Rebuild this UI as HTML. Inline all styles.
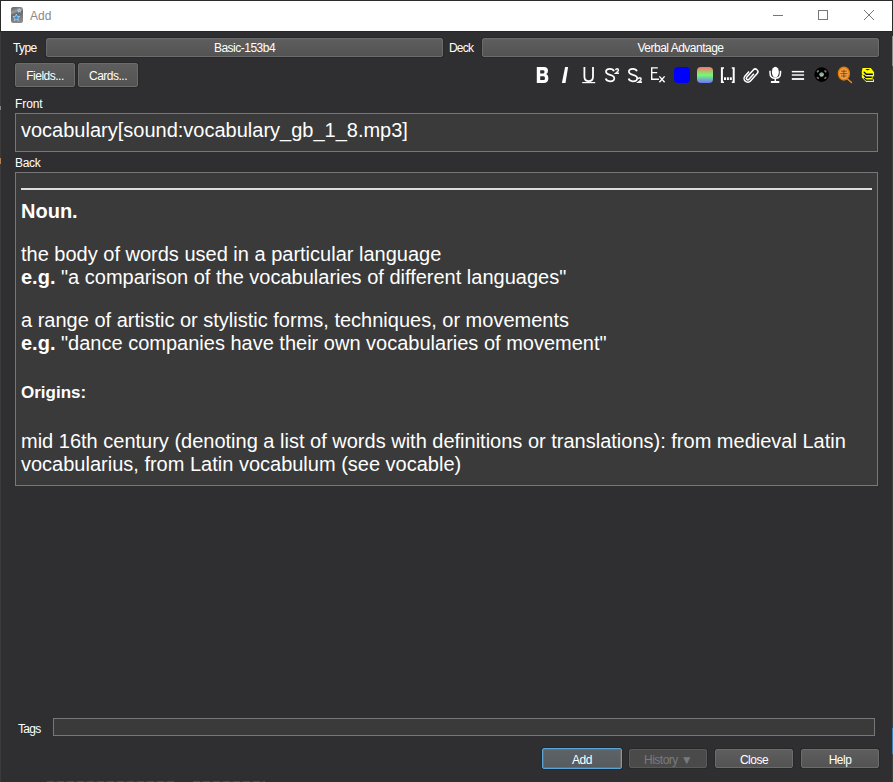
<!DOCTYPE html>
<html><head><meta charset="utf-8">
<style>
*{box-sizing:border-box;margin:0;padding:0}
html,body{width:893px;height:782px;overflow:hidden;background:#2f2f31;font-family:"Liberation Sans",sans-serif;color:#fff}
.a{position:absolute}
.ui{font-size:12px;letter-spacing:-0.5px;white-space:nowrap;line-height:14px}
.btn{position:absolute;border:1px solid #6c6c6c;border-radius:2px;background:linear-gradient(#5e5e5e,#535353);box-shadow:0 0 0 1px #282828;text-align:center;color:#fff;overflow:hidden}
.fld{position:absolute;border:1px solid #777;background:#3a3a3a}
.big{font-size:20px;line-height:23px;white-space:nowrap;letter-spacing:0}
</style></head><body>
<!-- window frame -->
<div class="a" style="left:0;top:0;width:893px;height:1px;background:#2b2b2b"></div>
<div class="a" style="left:0;top:0;width:1px;height:31px;background:#2b2b2b"></div>
<div class="a" style="left:1px;top:1px;width:891px;height:30px;background:#fff"></div>
<div class="a" style="left:0;top:31px;width:893px;height:1px;background:#262626"></div>
<div class="a" style="left:0;top:32px;width:1px;height:750px;background:#3a3a3a"></div>
<div class="a" style="left:0;top:106px;width:1px;height:4px;background:#858585"></div>
<div class="a" style="left:0;top:158px;width:1px;height:6px;background:#b88048"></div>
<div class="a" style="left:892px;top:0;width:1px;height:36px;background:#2b2b2b"></div>
<div class="a" style="left:892px;top:36px;width:1px;height:30px;background:#8a8a8a"></div>
<div class="a" style="left:892px;top:66px;width:1px;height:662px;background:#414141"></div>
<div class="a" style="left:892px;top:728px;width:1px;height:26px;background:#3b7db2"></div>
<div class="a" style="left:892px;top:754px;width:1px;height:28px;background:#414141"></div>
<div class="a" style="left:47px;top:781px;width:128px;height:1px;background:repeating-linear-gradient(90deg,#4a4a4a 0 7px,#363636 7px 10px)"></div>
<div class="a" style="left:193px;top:781px;width:72px;height:1px;background:repeating-linear-gradient(90deg,#5a4545 0 7px,#363636 7px 10px)"></div>

<!-- title -->
<svg class="a" style="left:11px;top:7px" width="12" height="16" viewBox="11 7 12 16">
<defs><linearGradient id="ig" x1="0" y1="0" x2="0.3" y2="1"><stop offset="0" stop-color="#5a5a5a"/><stop offset="0.35" stop-color="#9a9a9a"/><stop offset="0.5" stop-color="#6a6a6a"/><stop offset="1" stop-color="#8a8a8a"/></linearGradient></defs>
<rect x="11" y="7" width="12" height="16" rx="2.5" fill="url(#ig)"/>
<polygon points="16.30,14.10 17.24,16.41 19.72,16.59 17.82,18.19 18.42,20.61 16.30,19.30 14.18,20.61 14.78,18.19 12.88,16.59 15.36,16.41" fill="#2f8fe0" stroke="#cfe6fa" stroke-width="0.6"/>
<polygon points="19.30,8.80 19.83,9.97 21.11,10.11 20.16,10.98 20.42,12.24 19.30,11.60 18.18,12.24 18.44,10.98 17.49,10.11 18.77,9.97" fill="#6ab0f0" stroke="#e0f0ff" stroke-width="0.5"/>
</svg>
<div class="a" style="left:30px;top:9px;font-size:12px;line-height:15px;color:#888">Add</div>
<!-- window controls -->
<div class="a" style="left:773px;top:15px;width:10px;height:1px;background:#777"></div>
<div class="a" style="left:818px;top:10px;width:10px;height:10px;border:1px solid #777"></div>
<svg class="a" style="left:864px;top:10px" width="10" height="10"><path d="M0 0L10 10M10 0L0 10" stroke="#777" stroke-width="1"/></svg>

<!-- type / deck -->
<div class="a ui" style="left:13px;top:41px;letter-spacing:-0.6px">Type</div>
<div class="btn ui" style="left:46px;top:38px;width:397px;height:19px;line-height:18px">Basic-153b4</div>
<div class="a ui" style="left:449px;top:41px;letter-spacing:-0.8px">Deck</div>
<div class="btn ui" style="left:482px;top:38px;width:397px;height:19px;line-height:18px">Verbal Advantage</div>

<!-- fields/cards -->
<div class="btn ui" style="left:15px;top:63px;width:60px;height:24px;line-height:24px">Fields...</div>
<div class="btn ui" style="left:78px;top:63px;width:60px;height:24px;line-height:24px">Cards...</div>

<!-- toolbar icons -->
<svg class="a" style="left:530px;top:62px" width="350" height="26" viewBox="530 62 350 26">
<!-- B -->
<path fill="#fff" fill-rule="evenodd" d="M536.8 67H544Q548 67 548 70.8Q548 73.3 546.2 74.1Q548.4 74.9 548.4 78.3Q548.4 83 543.6 83H536.8ZM540.2 70.2V73.4H543.3Q544.5 73.4 544.5 71.8Q544.5 70.2 543.3 70.2ZM540.2 76.3V80H543.6Q545 80 545 78.15Q545 76.3 543.6 76.3Z"/>
<!-- I -->
<path fill="#fff" d="M565.1 67H568.1L565.5 83H561.9Z"/>
<!-- U -->
<path fill="none" stroke="#fff" stroke-width="1.8" d="M584.4 67V76.5Q584.4 81.2 588.7 81.2Q593 81.2 593 76.5V67"/>
<rect x="582.2" y="82" width="13" height="1.2" fill="#fff"/>
<!-- S superscript -->
<path fill="none" stroke="#fff" stroke-width="1.7" d="M614 71.2C613.4 69.6 612 68.9 610 68.9C607.6 68.9 606 70 606 71.8C606 73.7 607.8 74.3 610 74.8C612.6 75.4 614.3 76.1 614.3 78.2C614.3 80.2 612.6 81.3 610 81.3C607.7 81.3 606.2 80.3 605.7 78.6"/>
<path fill="none" stroke="#f4f4f4" stroke-width="1.55" d="M615.7 70.1Q615.9 68.8 617.1 68.8Q618.4 68.8 618.4 70Q618.4 71 617.1 72L615.8 73.2H619"/>
<!-- S subscript -->
<path fill="none" stroke="#fff" stroke-width="1.7" d="M636.9 71.2C636.3 69.6 634.9 68.9 632.9 68.9C630.5 68.9 628.9 70 628.9 71.8C628.9 73.7 630.7 74.3 632.9 74.8C635.5 75.4 637.2 76.1 637.2 78.2C637.2 80.2 635.5 81.3 632.9 81.3C630.6 81.3 629.1 80.3 628.6 78.6"/>
<path fill="none" stroke="#f4f4f4" stroke-width="1.55" d="M638.3 79.1Q638.5 77.8 639.8 77.8Q641.1 77.8 641.1 79Q641.1 80 639.8 81L638.4 82.1H642"/>
<!-- Ex -->
<path fill="none" stroke="#fff" stroke-width="1.4" d="M657.8 67.9H651.7V79.3H659M651.7 72.6H657.2M659.4 76.4L664.6 82.3M664.6 76.4L659.4 82.3"/>
<!-- blue swatch -->
<rect x="674" y="67" width="16" height="16" rx="4" fill="#0000ff"/>
<!-- gradient swatch -->
<defs><linearGradient id="rg" x1="0" y1="0" x2="0" y2="1"><stop offset="0" stop-color="#ff7070"/><stop offset="0.5" stop-color="#70ff70"/><stop offset="1" stop-color="#7070ff"/></linearGradient></defs>
<rect x="697" y="67" width="16" height="16" rx="4" fill="url(#rg)"/>
<!-- [...] -->
<path fill="#fff" d="M720.9 67.2H724V68.7H722.9V81.5H724V83H720.9ZM734.7 67.2H731.8V68.7H732.7V81.5H731.8V83H734.7Z"/>
<rect x="724" y="77.3" width="2" height="2.7" fill="#fff"/><rect x="726.9" y="77.3" width="2" height="2.7" fill="#fff"/><rect x="729.8" y="77.3" width="2" height="2.7" fill="#fff"/>
<!-- paperclip -->
<g transform="translate(751.6 74.9) rotate(42) scale(-0.8 0.8)">
<path fill="none" stroke="#fff" stroke-width="1.9" d="M-1.2 -3V6.2A1.9 1.9 0 0 0 2.6 6.2V-6A3.3 3.3 0 0 0 -4 -6V6.5A4.6 4.6 0 0 0 5.2 6.5V-1"/>
</g>
<!-- mic -->
<ellipse cx="775.35" cy="72.1" rx="3.5" ry="5.4" fill="#fff"/>
<path fill="none" stroke="#fff" stroke-width="1.5" d="M770 70.7V73Q770 78.3 775.3 78.3Q780.5 78.3 780.5 73V70.7M775.3 78.3V81.6"/>
<rect x="770.9" y="81" width="8.4" height="2" fill="#fff"/>
<!-- menu -->
<rect x="791.8" y="70.9" width="12.3" height="1.5" fill="#fff"/>
<rect x="791.8" y="74.2" width="12.3" height="1.6" fill="#e8e8e8"/>
<rect x="791.8" y="78.1" width="12.3" height="1.8" fill="#fff"/>
<!-- black circle -->
<circle cx="821.7" cy="74.6" r="7.3" fill="#000"/>
<ellipse cx="817.9" cy="71.3" rx="1.4" ry="0.9" transform="rotate(-40 817.9 71.3)" fill="#777"/>
<ellipse cx="825.4" cy="71.3" rx="1.4" ry="0.9" transform="rotate(40 825.4 71.3)" fill="#777"/>
<ellipse cx="817.9" cy="77.9" rx="1.4" ry="0.9" transform="rotate(40 817.9 77.9)" fill="#777"/>
<ellipse cx="825.4" cy="77.9" rx="1.4" ry="0.9" transform="rotate(-40 825.4 77.9)" fill="#777"/>
<circle cx="821.6" cy="74.6" r="2.2" fill="#d8b08a"/>
<path d="M819.4 74.6A2.2 2.2 0 0 1 823.8 74.6Z" fill="#30c8b8"/>
<!-- magnifier -->
<line x1="847.5" y1="79" x2="851.5" y2="82.5" stroke="#e8922a" stroke-width="1.4" stroke-linecap="round"/>
<ellipse cx="843.9" cy="73.6" rx="5.5" ry="6.4" fill="#f0a048" stroke="#e47a00" stroke-width="1.4"/>
<path fill="none" stroke="#5a2a00" stroke-width="0.8" opacity="0.8" d="M843.9 69.5V77.8M840.3 73.6H847.5M841 71.2H846.8M841 76H846.8"/>
<!-- books -->
<path fill="#ffff00" d="M862.6 68H870.8L874.1 72.2V76.3L872.6 76.6V79.1L874 79.6V82.1H866.2L861.8 77.6V75L862.6 74.4L861.8 73.8V71.3Z"/>
<ellipse cx="867.6" cy="69.6" rx="2" ry="0.6" fill="#0b0b40"/>
<path fill="#0b0b40" d="M864 71.2L866.6 73.5H872.8V75H866L863.4 72.3ZM864 74.6L866.1 76.5H871.8V78H865.6L863.2 75.5ZM864.3 77.8L866.5 79.4H873V80.8H866L863.6 78.6Z"/>
</svg>

<!-- Front -->
<div class="a ui" style="left:15px;top:97px;letter-spacing:-0.1px">Front</div>
<div class="fld" style="left:15px;top:113px;width:863px;height:39px"></div>
<div class="a big" style="left:21px;top:119px">vocabulary[sound:vocabulary_gb_1_8.mp3]</div>

<!-- Back -->
<div class="a ui" style="left:15px;top:156px;letter-spacing:-0.3px">Back</div>
<div class="fld" style="left:15px;top:172px;width:863px;height:314px"></div>
<div class="a" style="left:21px;top:188px;width:851px;height:2px;background:#ddd"></div>
<div class="a big" style="left:21px;top:200px"><b>Noun.</b></div>
<div class="a big" style="left:21px;top:243px">the body of words used in a particular language</div>
<div class="a big" style="left:21px;top:266px"><b>e.g.</b> "a comparison of the vocabularies of different languages"</div>
<div class="a big" style="left:21px;top:309px">a range of artistic or stylistic forms, techniques, or movements</div>
<div class="a big" style="left:21px;top:332px"><b>e.g.</b> "dance companies have their own vocabularies of movement"</div>
<div class="a" style="left:21px;top:384px;font-size:17px;line-height:18px;font-weight:bold;white-space:nowrap">Origins:</div>
<div class="a big" style="left:21px;top:430px">mid 16th century (denoting a list of words with definitions or translations): from medieval Latin</div>
<div class="a big" style="left:21px;top:453px">vocabularius, from Latin vocabulum (see vocable)</div>

<!-- tags -->
<div class="a ui" style="left:18px;top:722px;letter-spacing:-0.7px">Tags</div>
<div class="fld" style="left:53px;top:718px;width:822px;height:18px"></div>

<!-- bottom buttons -->
<div class="btn ui" style="left:542px;top:748px;width:80px;height:21px;line-height:22px;border-color:#5aa5d5;background:linear-gradient(#5e6367,#565b5f);box-shadow:0 0 0 1px #282828,inset 0 0 0 1px #6a6e72">Add</div>
<div class="btn ui" style="left:629px;top:749px;width:78px;height:19px;line-height:20px;color:#7a7a7a;border-color:#5a5a5a;background:#4a4a4a">History ▼</div>
<div class="btn ui" style="left:715px;top:749px;width:78px;height:19px;line-height:20px">Close</div>
<div class="btn ui" style="left:801px;top:749px;width:78px;height:19px;line-height:20px">Help</div>
</body></html>
